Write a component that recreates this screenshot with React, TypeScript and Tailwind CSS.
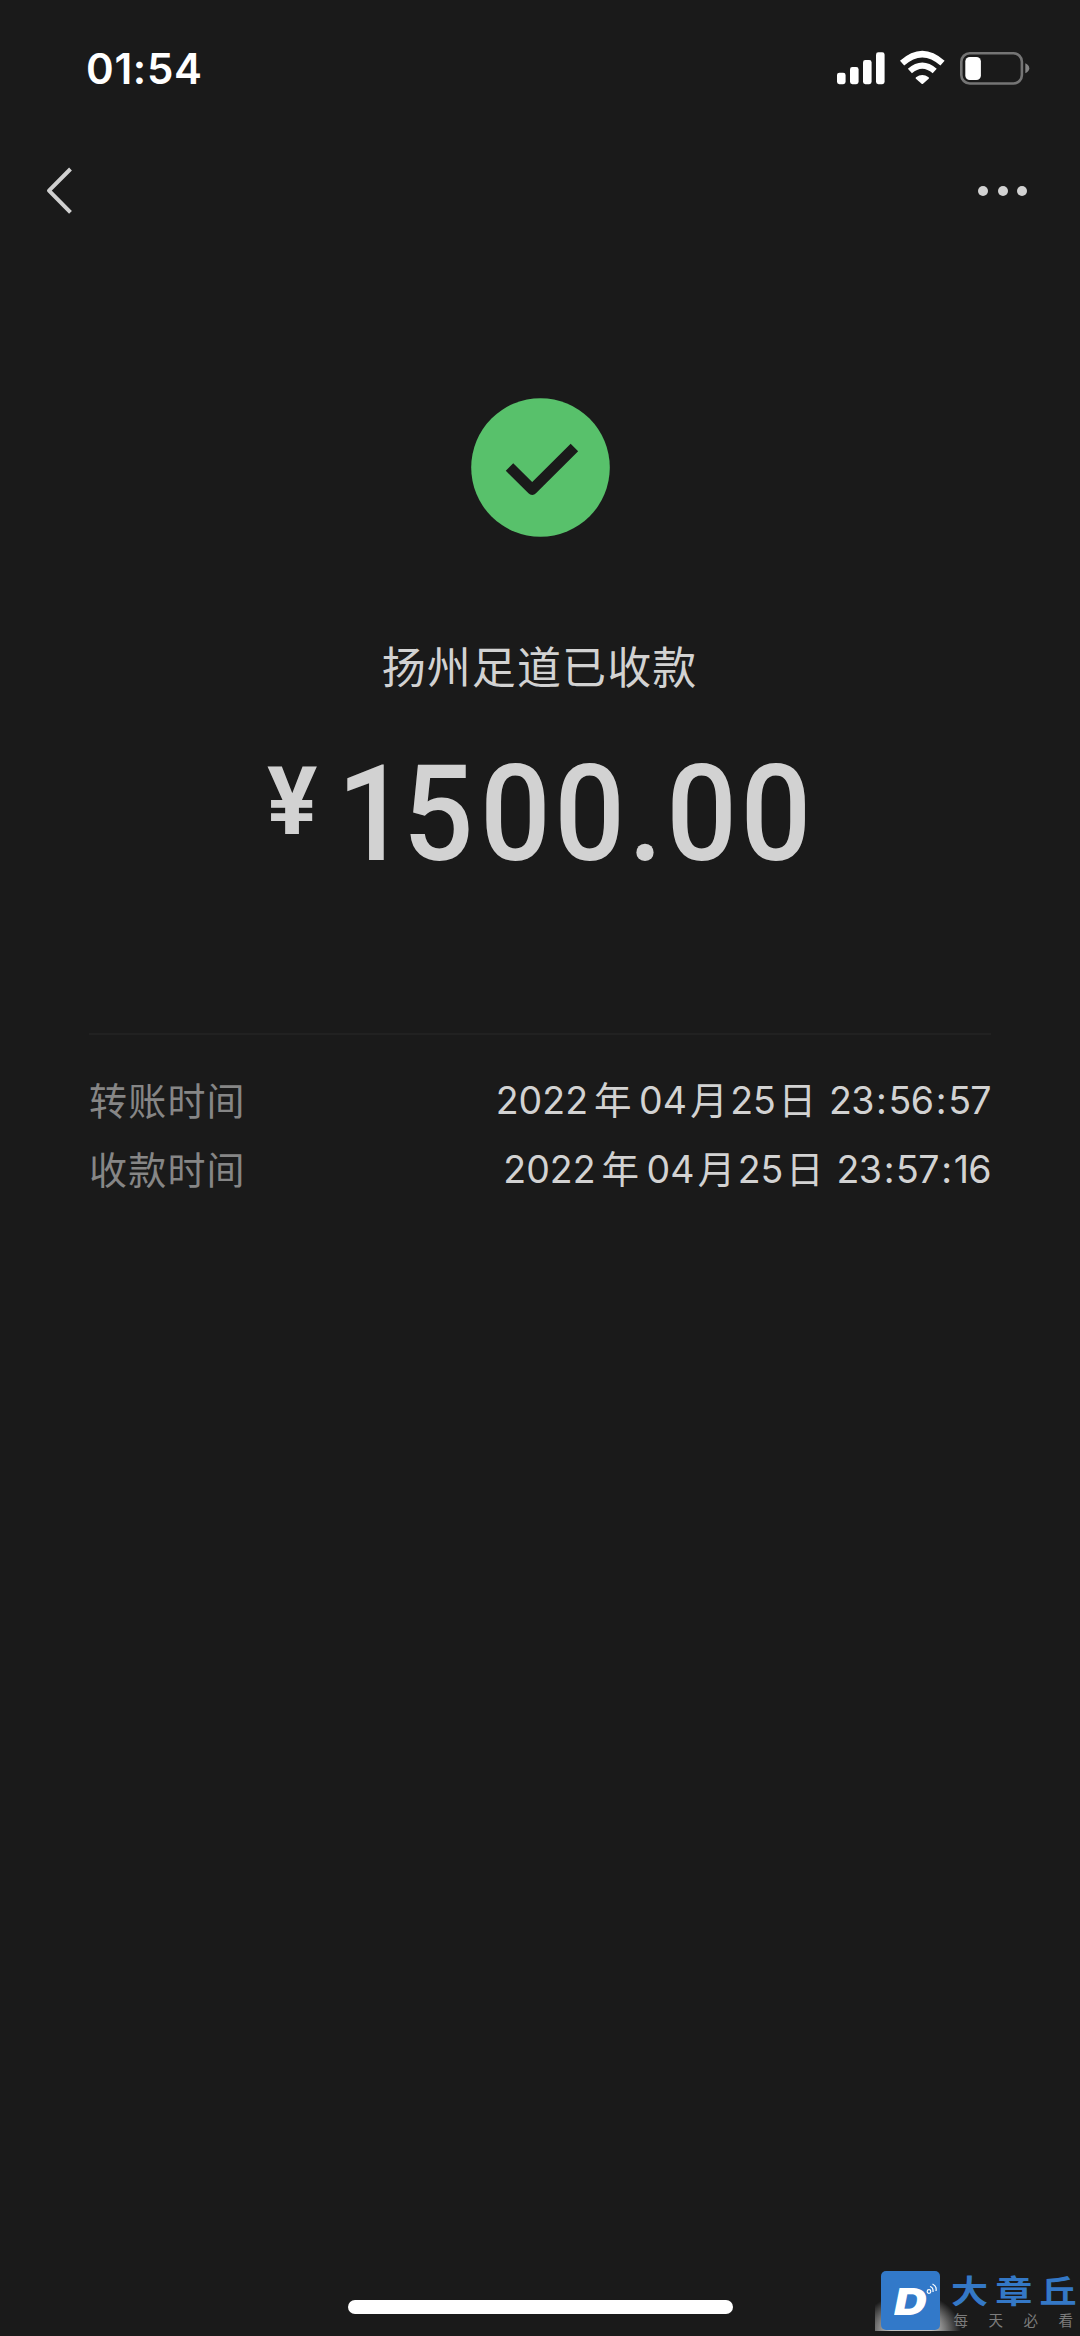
const cjk = "font-['Noto_Sans_CJK_SC',sans-serif]";
const latin = "font-['Inter','Noto_Sans_CJK_SC',sans-serif]";

function StatusIcons() {
  return (
    <svg className="block h-[40px] w-[200px]" viewBox="835 48 200 40" fill="none">
      <g fill="#fff">
        <rect x="837" y="72.7" width="8.600" height="11.500" rx="2.400" />
        <rect x="850" y="67" width="8.600" height="17.200" rx="2.400" />
        <rect x="863" y="60" width="8.600" height="24.200" rx="2.400" />
        <rect x="876" y="52.300" width="8.600" height="31.900" rx="2.400" />
        <path d="M916 77.200Q922.300 72.800 928.600 77.200Q929.400 77.900 928.700 78.700L923 83.800Q922.300 84.400 921.600 83.800L915.900 78.700Q915.200 77.900 916 77.200Z" />
      </g>
      <path d="M902.100 63.200Q922.300 45 942.500 63.200" stroke="#fff" strokeWidth="6.300" />
      <path d="M909.900 71Q922.300 60.200 934.700 71" stroke="#fff" strokeWidth="6.200" />
      <rect x="961.300" y="53.300" width="60.600" height="30.200" rx="8.500" stroke="#757575" strokeWidth="2.600" />
      <rect x="965.300" y="57" width="15.600" height="23" rx="4.500" fill="#fff" />
      <path d="M1025.300 63.200Q1029.300 65 1029.300 68.200T1025.300 73.200Z" fill="#858585" />
    </svg>
  );
}

function Row({ label, date, time }: { label: string; date: string[]; time: string[] }) {
  return (
    <div className="flex h-[69px] items-center justify-between whitespace-nowrap text-[38px] leading-[50px]">
      <span className={`${cjk} -mt-[10px] tracking-[1.2px] text-[#868686]`}>{label}</span>
      <span className={`${latin} -mt-[5px] flex items-center text-[37.5px] text-[#d2d2d2]`}>
        <span>{date[0]}</span>
        <span className="ml-[6px] mr-[7.5px]">年</span>
        <span>{date[1]}</span>
        <span className="ml-[3.3px] mr-[2.5px]">月</span>
        <span>{date[2]}</span>
        <span className="ml-[2.5px] mr-[13px]">日</span>
        <span className="tracking-[-0.6px]">{time[0]}</span>
        <span className="ml-[2.4px] mr-[1.6px]">:</span>
        <span className="tracking-[-0.6px]">{time[1]}</span>
        <span className="ml-[2.4px] mr-[1.6px]">:</span>
        <span className="tracking-[-0.6px]">{time[2]}</span>
      </span>
    </div>
  );
}

function Watermark() {
  return (
    <div className="absolute bottom-0 right-0 flex h-[72px] w-[205px]">
      <div className="absolute left-0 top-[26px] h-[41px] w-[90px] bg-[radial-gradient(50px_38px_at_36px_100%,#c0c0c0_40%,#858585_64%,#1a1a1a00_100%)]" />
      <div className="relative ml-[6px] mt-[7px] flex size-[59px] shrink-0 items-center justify-center rounded-[5px] bg-[#3279c9]">
        <span className="mr-[1px] mt-[2px] scale-x-[1.22] font-['Inter',sans-serif] text-[37px] font-black italic leading-none text-white">D</span>
        <svg className="absolute left-[44px] top-[11px] size-[14px]" viewBox="0 0 14 14" fill="none" stroke="#fff" strokeWidth="1.2">
          <circle cx="4" cy="9.500" r="1.800" />
          <path d="M5 4.500Q8.500 5.500 8 10M7.500 2Q12 4 11 9" />
        </svg>
      </div>
      <div className={`${cjk} ml-[12px] mt-[5px] flex w-[126px] flex-col whitespace-nowrap`}>
        <div className="-ml-[1px] flex h-[40px] origin-left scale-x-[1.03] scale-y-[0.88] gap-[7px] text-[36px] font-bold leading-[40px] text-[#3478c6]">
          <span>大</span>
          <span>章</span>
          <span>丘</span>
        </div>
        <div className="ml-[1.5px] mt-[3px] flex h-[16px] gap-[20.5px] text-[14.5px] leading-[16px] text-[#7c7c7c]">
          <span>每</span>
          <span>天</span>
          <span>必</span>
          <span>看</span>
        </div>
      </div>
    </div>
  );
}

export default function App() {
  return (
    <main className="relative flex h-[2336px] w-[1080px] flex-col overflow-hidden bg-[#1a1a1a]">
      <header className="flex h-[136px] items-start justify-between pl-[86px] pr-[45px] pt-[48px]">
        <span className="font-['Inter',sans-serif] text-[42px] font-semibold leading-[42px] tracking-[0.7px] text-white">01:54</span>
        <StatusIcons />
      </header>
      <nav className="flex h-[110px] items-center justify-between pl-[44px] pr-[53px]">
        <svg className="block h-[50px] w-[30px]" viewBox="44 166 30 50" fill="none" stroke="#d0d0d0" strokeWidth="4">
          <path d="M70.500 169L49 190.700L70.500 212.400" strokeLinejoin="round" />
        </svg>
        <div className="flex gap-[9.5px]">
          <i className="size-[10px] rounded-full bg-[#d2d2d2]" />
          <i className="size-[10px] rounded-full bg-[#d2d2d2]" />
          <i className="size-[10px] rounded-full bg-[#d2d2d2]" />
        </div>
      </nav>
      <section className="flex flex-col items-center pt-[152px]">
        <svg className="block size-[139px]" viewBox="470.500 398 139 139" fill="none">
          <circle cx="540" cy="467.500" r="69.300" fill="#58c16b" />
          <path d="M509 467L531.700 489.600L573.900 447.400" stroke="#1a1a1a" strokeWidth="10.600" strokeLinejoin="round" />
        </svg>
        <h1 className={`${cjk} mt-[96px] h-[64px] pr-[1px] text-[44px] leading-[64px] tracking-[1.1px] text-[#d2d2d2]`}>扬州足道已收款</h1>
        <div className="mt-[51px] flex h-[135px] w-full items-start pl-[267px] font-['Roboto',sans-serif] font-medium leading-none text-[#d2d2d2]">
          <span className="mt-[7px] w-[70px] text-[94px] font-bold">¥</span>
          <span className="origin-left scale-x-[0.93] text-[134px] tracking-[3.6px]">
            <span className="tracking-[-5.4px]">1</span>
            <span className="tracking-[6.8px]">5</span>00.00
          </span>
        </div>
      </section>
      <section className="mx-[89px] mt-[150px] border-t-2 border-[#212121] pt-[34px]">
        <Row label="转账时间" date={["2022", "04", "25"]} time={["23", "56", "57"]} />
        <Row label="收款时间" date={["2022", "04", "25"]} time={["23", "57", "16"]} />
      </section>
      <div className="mx-auto mb-[22px] mt-auto h-[14px] w-[385px] rounded-full bg-white" />
      <Watermark />
    </main>
  );
}
